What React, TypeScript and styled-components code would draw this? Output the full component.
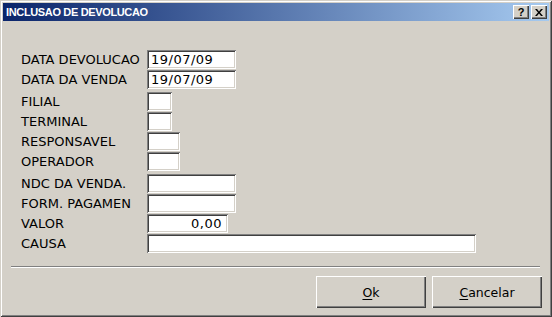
import React from "react";
import styled, { createGlobalStyle } from "styled-components";

const Global = createGlobalStyle`
  html, body { margin: 0; padding: 0; background: #d4d0c8; }
  * { box-sizing: border-box; }
`;

const Window = styled.div`
  width: 552px;
  height: 317px;
  background: #d4d0c8;
  padding: 3px;
  display: flex;
  flex-direction: column;
  box-shadow: inset 1px 1px 0 #d4d0c8, inset -1px -1px 0 #404040,
    inset 2px 2px 0 #ffffff, inset -2px -2px 0 #808080;
  font-family: "DejaVu Sans", Verdana, sans-serif;
  color: #000;
`;

const TitleBar = styled.div`
  height: 18px;
  display: flex;
  align-items: center;
  padding: 0 2px 0 2px;
  background: linear-gradient(to right, #0a246a, #a6caf0);
`;

const Title = styled.div`
  flex: 1;
  color: #fff;
  font-family: "Liberation Sans", Arial, sans-serif;
  font-weight: bold;
  font-size: 11px;
  letter-spacing: -0.35px;
  padding-left: 1px;
`;

const CaptionButton = styled.div`
  width: 16px;
  height: 14px;
  margin-left: 2px;
  background: #d4d0c8;
  box-shadow: inset 1px 1px 0 #ffffff, inset -1px -1px 0 #404040,
    inset -2px -2px 0 #808080;
  display: flex;
  align-items: center;
  justify-content: center;
  font-family: "Liberation Sans", Arial, sans-serif;
  font-weight: bold;
  font-size: 11px;
  line-height: 1;
  color: #000;
`;

const Form = styled.div`
  margin-top: 29px;
  padding-left: 18px;
  display: flex;
  flex-direction: column;
`;

const Row = styled.div<{ $top: number }>`
  display: flex;
  align-items: center;
  height: 19px;
  margin-top: ${(p) => p.$top}px;
`;

const Label = styled.div`
  width: 126px;
  font-size: 13px;
  line-height: 19px;
  padding-bottom: 1px;
  white-space: nowrap;
`;

const Field = styled.div<{ $w: number; $right?: boolean }>`
  width: ${(p) => p.$w}px;
  height: 19px;
  background: #fff;
  box-shadow: inset 1px 1px 0 #808080, inset -1px -1px 0 #ffffff,
    inset 2px 2px 0 #404040, inset -2px -2px 0 #d4d0c8;
  font-size: 13px;
  line-height: 19px;
  padding: 0 ${(p) => (p.$right ? 6 : 4)}px 0 4px;
  text-align: ${(p) => (p.$right ? "right" : "left")};
  letter-spacing: 0.5px;
  white-space: nowrap;
  overflow: hidden;
`;

const Separator = styled.div`
  margin: 13px 9px 0 8px;
  height: 2px;
  border-top: 1px solid #808080;
  border-bottom: 1px solid #ffffff;
`;

const Footer = styled.div`
  display: flex;
  justify-content: flex-end;
  gap: 6px;
  margin-top: 8px;
  padding-right: 7px;
`;

const Button = styled.div`
  width: 110px;
  height: 32px;
  display: flex;
  align-items: center;
  justify-content: center;
  background: #d4d0c8;
  box-shadow: inset 1px 1px 0 #ffffff, inset -1px -1px 0 #404040,
    inset -2px -2px 0 #808080;
  font-size: 12.5px;
  color: #000;
  u { text-decoration: underline; text-underline-offset: 2px; }
`;

const rows: { label: string; w: number; value?: string; right?: boolean; top: number }[] = [
  { label: "DATA DEVOLUCAO", w: 89, value: "19/07/09", top: 0 },
  { label: "DATA DA VENDA", w: 89, value: "19/07/09", top: 1 },
  { label: "FILIAL", w: 25, top: 3 },
  { label: "TERMINAL", w: 25, top: 1 },
  { label: "RESPONSAVEL", w: 33, top: 1 },
  { label: "OPERADOR", w: 33, top: 1 },
  { label: "NDC DA VENDA.", w: 89, top: 3 },
  { label: "FORM. PAGAMEN", w: 89, top: 1 },
  { label: "VALOR", w: 81, value: "0,00", right: true, top: 1 },
  { label: "CAUSA", w: 329, top: 1 },
];

export default function App() {
  return (
    <>
      <Global />
      <Window>
        <TitleBar>
          <Title>INCLUSAO DE DEVOLUCAO</Title>
          <CaptionButton>?</CaptionButton>
          <CaptionButton>
            <svg width="8" height="7" viewBox="0 0 8 7">
              <path d="M0 0h2l2 2.5L6 0h2L5 3.5 8 7H6L4 4.5 2 7H0l3-3.5z" fill="#000" />
            </svg>
          </CaptionButton>
        </TitleBar>
        <Form>
          {rows.map((r) => (
            <Row key={r.label} $top={r.top}>
              <Label>{r.label}</Label>
              <Field $w={r.w} $right={r.right}>
                {r.value ?? ""}
              </Field>
            </Row>
          ))}
        </Form>
        <Separator />
        <Footer>
          <Button>
            <span>
              <u>O</u>k
            </span>
          </Button>
          <Button>
            <span>
              <u>C</u>ancelar
            </span>
          </Button>
        </Footer>
      </Window>
    </>
  );
}
